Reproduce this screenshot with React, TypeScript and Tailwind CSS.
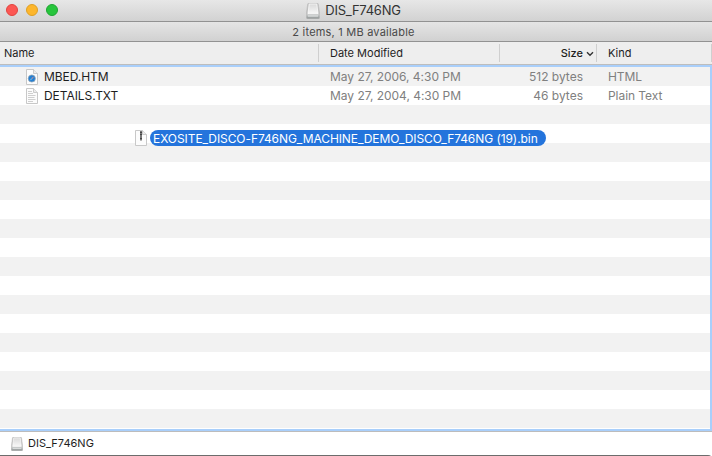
const stripes = Array.from({ length: 17 }, (_, i) => i);

function Drive({ className }: { className: string }) {
  return (
    <svg className={className} viewBox="0 0 14 16" fill="none" preserveAspectRatio="none">
      <defs>
        <linearGradient id="driveTop" x1="0" y1="0" x2="0" y2="1">
          <stop offset="0" stopColor="#d9d9d9" />
          <stop offset="1" stopColor="#f8f8f8" />
        </linearGradient>
        <linearGradient id="driveFront" x1="0" y1="0" x2="0" y2="1">
          <stop offset="0" stopColor="#c9cccc" />
          <stop offset="1" stopColor="#8f9494" />
        </linearGradient>
      </defs>
      <path d="M2.400.4h9.200q.6 0 .7.700L13.700 11v3.600q0 1.100-1.100 1.100H1.400Q.3 15.700.3 14.600V11L1.700 1.100Q1.800.4 2.400.4z" fill="#c4c4c4" stroke="#b0b0b0" strokeWidth=".5" />
      <path d="M3.200 1h7.600l1.200 9.800H2z" fill="url(#driveTop)" stroke="#fff" strokeWidth=".7" />
      <path d="M.6 11.600h12.800v3q0 .9-.9.900h-11q-.9 0-.9-.9z" fill="url(#driveFront)" />
      <path d="M2 13h10" stroke="#e6e8e8" strokeWidth="1" />
    </svg>
  );
}

function FileIcon({ kind }: { kind: "html" | "text" | "bin" }) {
  return (
    <svg className="h-4 w-3 shrink-0" viewBox="0 0 12 16" fill="none">
      <path d="M.5.5h7l4 4v11H.5z" fill="#fcfcfc" stroke="#c2c2c2" strokeWidth=".9" />
      <path d="M7.500.5v4h4" fill="#ececec" stroke="#c2c2c2" strokeWidth=".8" />
      {kind === "html" && (
        <>
          <circle cx="5.800" cy="9.500" r="3.600" fill="#2580d2" stroke="#93a5b3" strokeWidth=".7" />
          <path d="m8 7.400-2.600 1.500 1 1z" fill="#d58c88" />
          <path d="m3.700 11.600 1.500-2.400 1 1z" fill="#7fbdec" />
        </>
      )}
      {kind === "text" && (
        <path d="M2 3.500h4M2 5.500h5M2 7.500h7.500M2 9.500h6.500M2 11.500h7.500M2 13.500h5" stroke="#cacaca" strokeWidth=".9" />
      )}
      {kind === "bin" && (
        <>
          <path d="M6 1v9.500" stroke="#777" strokeWidth="2" />
          <path d="M5 2.500h2M5 4.500h2M5 8.500h2" stroke="#444" strokeWidth="1" />
        </>
      )}
    </svg>
  );
}

interface FileRow {
  name: string;
  date: string;
  size: string;
  type: string;
  kind: "html" | "text";
}

const files: FileRow[] = [
  { name: "MBED.HTM", date: "May 27, 2006, 4:30 PM", size: "512 bytes", type: "HTML", kind: "html" },
  { name: "DETAILS.TXT", date: "May 27, 2004, 4:30 PM", size: "46 bytes", type: "Plain Text", kind: "text" },
];

export default function App() {
  return (
    <div className="relative flex h-[456px] w-[712px] flex-col overflow-hidden rounded-br-[4px] bg-white font-['Inter','Liberation_Sans',sans-serif] text-[12px] text-[#1e1e1e]">
      <header className="relative flex h-[22px] shrink-0 items-center justify-center border-b border-[#929292] bg-linear-to-b from-[#e7e7e7] to-[#d2d2d2] pr-[5px]">
        <div className="absolute left-[6px] top-1 flex gap-2">
          <i className="size-3 rounded-full border border-[#e2443f] bg-[#fc5753]" />
          <i className="size-3 rounded-full border border-[#dfa023] bg-[#fdb62c]" />
          <i className="size-3 rounded-full border border-[#1fa532] bg-[#27c53c]" />
        </div>
        <Drive className="mr-[5px] h-4 w-[14px]" />
        <span className="-mt-px text-[13px] leading-5 tracking-[-0.25px] text-[#333]">DIS_F746NG</span>
      </header>
      <div className="flex h-5 shrink-0 items-center justify-center border-b border-[#929292] bg-linear-to-b from-[#e5e5e5] to-[#d1d1d1] pr-[5px] pt-px text-[11px] tracking-[0.21px] text-[#494949]">
        <span>2 items, 1 MB available</span>
      </div>
      <div className="grid h-[23px] shrink-0 grid-cols-[319px_181px_97px_115px] items-center border-b border-[#bdbdbd] bg-[#eee] text-[11px]">
        <span className="pl-1">Name</span>
        <span className="-ml-px flex h-[18px] items-center border-l border-[#cfcfcf] pl-[11px]">Date Modified</span>
        <span className="-ml-px flex h-[18px] items-center justify-end gap-[3px] border-l border-[#cfcfcf] pr-[3px] font-medium">
          Size
          <svg className="h-[7px] w-[8px]" viewBox="0 0 8 7" fill="none"><path d="m1 2.200 3 3 3-3" stroke="#333" strokeWidth="1.400" /></svg>
        </span>
        <span className="-ml-px flex h-[18px] items-center border-x border-[#cfcfcf] pl-[11px]">Kind</span>
      </div>
      <main className="h-[366px] shrink-0 border-y-2 border-r-2 border-[#a9cffb]">
        {files.map((file) => (
          <div key={file.name} className="grid h-[19px] grid-cols-[319px_181px_97px_113px] items-center odd:bg-[#f2f2f2]">
            <span className="flex items-center gap-[6px] pl-[26px]"><FileIcon kind={file.kind} /><span className="tracking-[-0.06px]">{file.name}</span></span>
            <span className="pl-[11px] tracking-[-0.03px] text-[#808080]">{file.date}</span>
            <span className="pr-[14px] text-right text-[#808080]">{file.size}</span>
            <span className="pl-[11px] tracking-[-0.06px] text-[#808080]">{file.type}</span>
          </div>
        ))}
        {stripes.map((row) => (
          <div key={row} className="h-[19px] odd:bg-[#f2f2f2]" />
        ))}
      </main>
      <footer className="flex h-[25px] shrink-0 items-center border-b border-t border-b-[#6c6c6c] border-t-[#bcbcbc] pl-[11px] text-[11px]">
        <Drive className="mr-[5px] h-[14px] w-[12px]" />
        <span>DIS_F746NG</span>
      </footer>
      <div className="absolute left-[135px] top-[130px] flex items-center gap-[3px]">
        <FileIcon kind="bin" />
        <span className="h-4 w-[396px] whitespace-nowrap rounded-full bg-[#2474dc] pl-[3px] leading-[17px] tracking-[-0.075px] text-white">EXOSITE_DISCO-F746NG_MACHINE_DEMO_DISCO_F746NG (19).bin</span>
      </div>
    </div>
  );
}
